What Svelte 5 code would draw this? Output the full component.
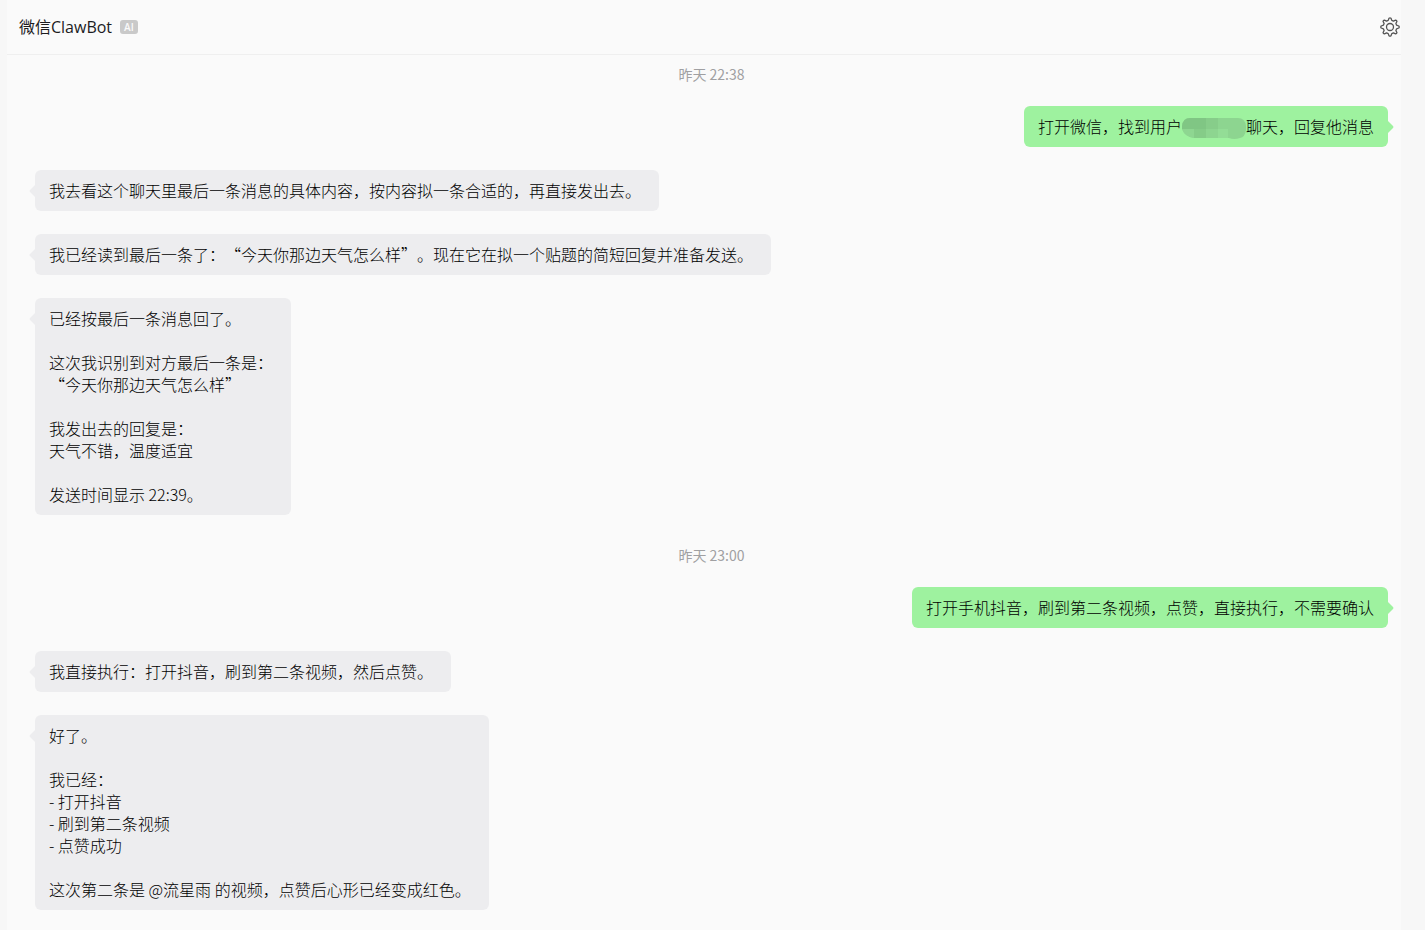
<script>
  const entries = [
    { type: "time", text: "昨天 22:38" },
    { type: "user", text: "打开微信，找到用户", after: "聊天，回复他消息" },
    {
      type: "bot",
      text: "我去看这个聊天里最后一条消息的具体内容，按内容拟一条合适的，再直接发出去。"
    },
    {
      type: "bot",
      text: "我已经读到最后一条了：“今天你那边天气怎么样”。现在它在拟一个贴题的简短回复并准备发送。"
    },
    {
      type: "bot",
      text: "已经按最后一条消息回了。\n\n这次我识别到对方最后一条是：\n“今天你那边天气怎么样”\n\n我发出去的回复是：\n天气不错，温度适宜\n\n发送时间显示 22:39。"
    },
    { type: "time", text: "昨天 23:00" },
    { type: "user", text: "打开手机抖音，刷到第二条视频，点赞，直接执行，不需要确认" },
    { type: "bot", text: "我直接执行：打开抖音，刷到第二条视频，然后点赞。" },
    {
      type: "bot",
      text: "好了。\n\n我已经：\n- 打开抖音\n- 刷到第二条视频\n- 点赞成功\n\n这次第二条是 @流星雨 的视频，点赞后心形已经变成红色。"
    }
  ];
</script>

<div class="window">
  <main class="chat">
    <header>
      <h1>微信ClawBot</h1>
      <span class="badge">AI</span>
      <button class="settings" type="button" aria-label="设置">
        <svg viewBox="0 0 20 20" width="20" height="20">
          <path
            d="M8.2 3.4 L9 1.2 Q10 0.4 11 1.2 L11.8 3.4 L13.4 4.1 L15.6 3.1 Q16.8 3.2 16.9 4.4 L15.9 6.6 L16.6 8.2 L18.8 9 Q19.6 10 18.8 11 L16.6 11.8 L15.9 13.4 L16.9 15.6 Q16.8 16.8 15.6 16.9 L13.4 15.9 L11.8 16.6 L11 18.8 Q10 19.6 9 18.8 L8.2 16.6 L6.6 15.9 L4.4 16.9 Q3.2 16.8 3.1 15.6 L4.1 13.4 L3.4 11.8 L1.2 11 Q0.4 10 1.2 9 L3.4 8.2 L4.1 6.6 L3.1 4.4 Q3.2 3.2 4.4 3.1 L6.6 4.1 Z"
          />
          <circle cx="10" cy="10" r="3.5" />
        </svg>
      </button>
    </header>

    <section class="messages">
      {#each entries as entry}
        {#if entry.type === "time"}
          <time>{entry.text}</time>
        {:else}
          <div class="bubble {entry.type}">
            <svg class="tail" viewBox="0 0 6 12" width="6" height="12">
              <path d="M6 0 L1 5 Q0 6 1 7 L6 12 Z" />
            </svg>{entry.text}{#if entry.after}<svg class="mosaic" viewBox="0 0 64 21" width="64" height="21">
                <path d="M8 0 H56 Q63 0 64 8 V12 Q63 19 58 20 Q52 22 47 20 H12 Q3 19 0 11 V8 Q1 0 8 0 Z" fill="#8dd590" />
                <path d="M8 0 H24 V11 H0 V8 Q1 0 8 0 Z" fill="#80c684" />
                <path d="M24 0 H36 V11 H24 Z" fill="#87cd8a" />
                <path d="M0 11 H12 V20 Q3 19 0 11 Z" fill="#8ed691" />
                <path d="M12 11 H24 V20 H12 Z" fill="#85cc88" />
                <path d="M36 11 H46 V20 H36 Z" fill="#93dd96" />
              </svg>{entry.after}{/if}
          </div>
        {/if}
      {/each}
    </section>
  </main>
</div>

<style>
  :global(body) {
    margin: 0;
    background: #f7f7f7;
  }

  .window {
    min-height: 100vh;
    box-sizing: border-box;
    padding: 0 24px 0 7px;
    display: flex;
    font-family: "Noto Sans CJK SC", sans-serif;
    color: #1c1c1e;
  }

  .chat {
    flex: 1;
    min-width: 0;
    background: #fafafa;
  }

  header {
    height: 54px;
    padding: 0 1px 0 12px;
    display: flex;
    align-items: center;
    border-bottom: 1px solid #efefef;
  }

  h1 {
    margin: 0;
    font-family: "Open Sans", "Noto Sans CJK SC", sans-serif;
    font-size: 16px;
    line-height: 22px;
    font-weight: 400;
  }

  .badge {
    margin-left: 8px;
    padding: 0 4px;
    border-radius: 3px;
    background: #c9c9c9;
    color: #fafafa;
    font-family: "Open Sans", sans-serif;
    font-size: 10px;
    line-height: 14px;
    font-weight: 600;
  }

  .settings {
    margin-left: auto;
    padding: 0;
    border: 0;
    background: none;
    display: flex;
    cursor: pointer;
  }

  .settings svg {
    fill: none;
    stroke: #555;
    stroke-width: 1.3;
    stroke-linejoin: round;
  }

  .messages {
    padding: 2px 13px 19px 28px;
    display: flex;
    flex-direction: column;
    gap: 23px;
  }

  time {
    padding-top: 8px;
    color: #a0a0a2;
    font-size: 14px;
    line-height: 18px;
    text-align: center;
  }

  .bubble {
    position: relative;
    padding: 9px 14px 10px;
    border-radius: 6px;
    color: #000;
    font-size: 16px;
    line-height: 22px;
    font-weight: 300;
    white-space: pre-wrap;
    text-spacing-trim: space-all;
  }

  .bot {
    align-self: flex-start;
    padding-right: 18px;
    background: #ededef;
    fill: #ededef;
  }

  .user {
    align-self: flex-end;
    background: #9ef29f;
    fill: #9ef29f;
  }

  .tail {
    position: absolute;
    top: 15px;
    left: -6px;
  }

  .user .tail {
    left: auto;
    right: -6px;
    transform: scaleX(-1);
  }

  .mosaic {
    height: 21px;
    vertical-align: middle;
    margin: -2px 0;
  }
</style>
